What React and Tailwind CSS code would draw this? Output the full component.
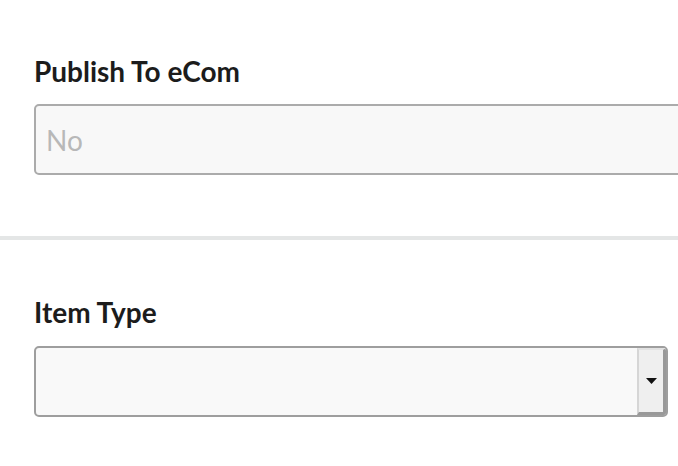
import React from 'react';

const Label = ({ children }) => (
    <div className="text-[28px] leading-[32px] font-bold text-[#1c1c1c]">{children}</div>
);

export default function App() {
    return (
        <div className="w-[678px] h-[466px] overflow-hidden bg-white" style={{ fontFamily: 'Lato, "Open Sans", sans-serif' }}>
            <div className="pl-[34px] pt-[55px]">
                <Label>Publish To eCom</Label>
                <div className="mt-[17px] w-[700px] h-[71px] flex items-center px-[10px] border-2 border-[#ababab] rounded-[5px] bg-[#f8f8f8]">
                    <span className="text-[28px] text-[#b8b8b8]">No</span>
                </div>
            </div>

            <div className="mt-[61px] h-[4px] bg-[#e4e6e6]" />

            <div className="pl-[34px] pt-[56px]">
                <Label>Item Type</Label>
                <div className="mt-[18px] w-[634px] h-[71px] flex border-2 border-[#9e9e9e] rounded-[5px] bg-[#f9f9f9] overflow-hidden">
                    <div className="flex-1" />
                    <div className="w-[29px] flex items-center justify-center bg-[#efefef] border-l-2 border-t-2 border-l-[#d6d6d6] border-t-[#e2e2e2] border-r-[3px] border-b-[3px] border-r-[#999] border-b-[#999]">
                        <svg width="11" height="6" viewBox="0 0 11 6">
                            <path d="M0 0 L11 0 L5.5 6 Z" fill="#111" />
                        </svg>
                    </div>
                </div>
            </div>
        </div>
    );
}
